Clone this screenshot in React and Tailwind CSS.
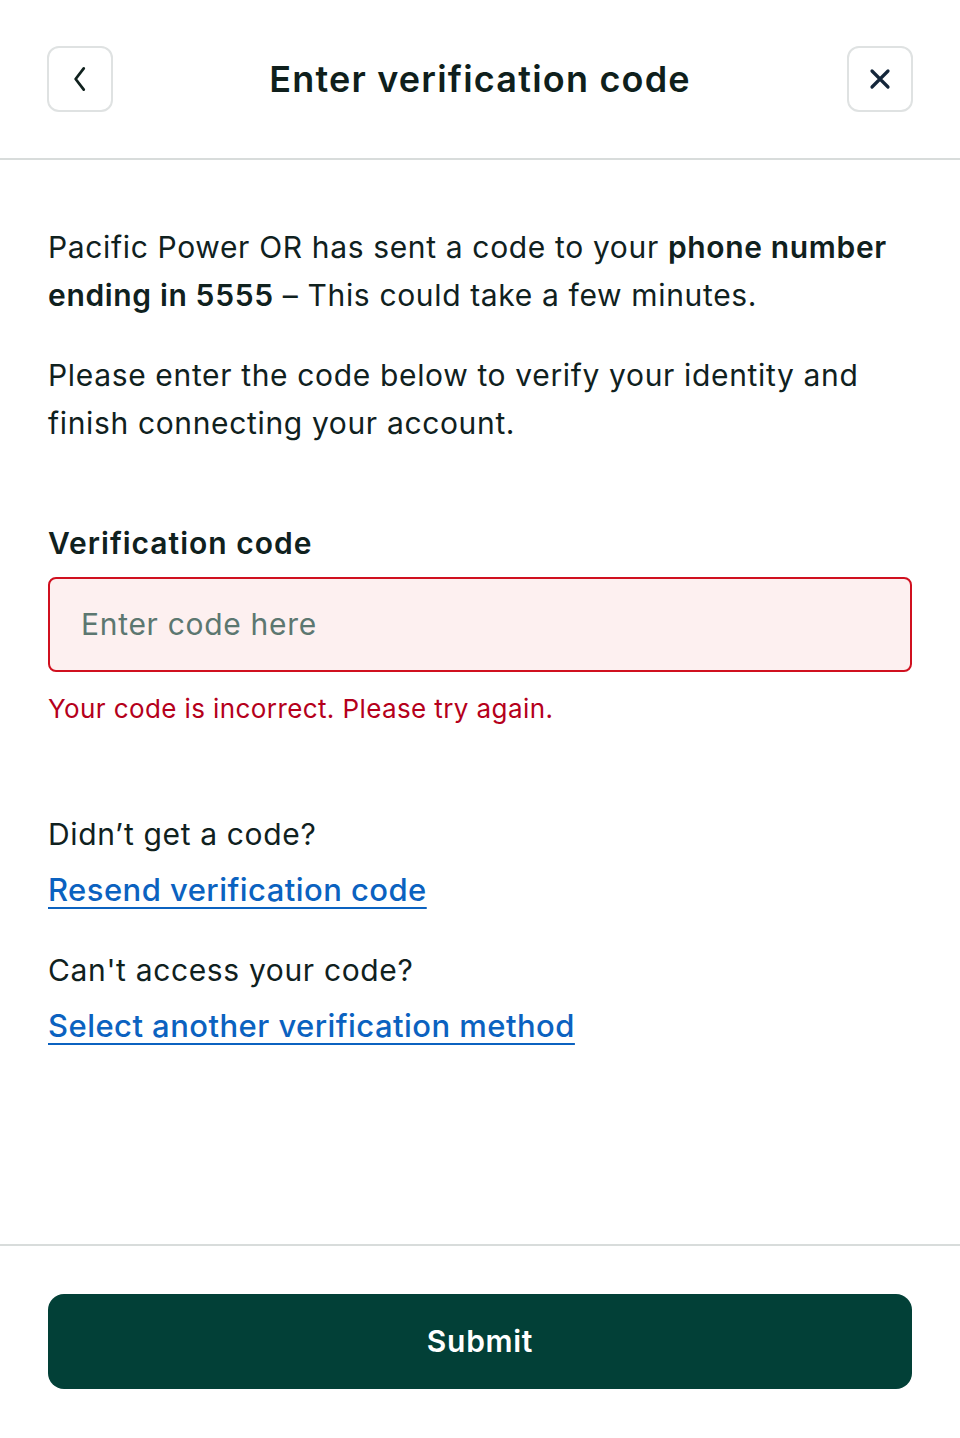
export default function App() {
  return (
    <div className="min-h-screen w-full bg-white flex flex-col font-['Inter',sans-serif] text-[#10211e]">
      {/* Header */}
      <div className="h-[160px] border-b-2 border-[#d8dcdb] px-[47px] flex items-center justify-between">
        <button className="w-[66px] h-[66px] rounded-[12px] border-2 border-[#dfe2e2] flex items-center justify-center">
          <svg width="30" height="30" viewBox="0 0 24 24" fill="none" stroke="#10211e" strokeWidth="2.2" strokeLinecap="round" strokeLinejoin="round">
            <path d="M15 3.5 L8.5 12 L15 20.5" />
          </svg>
        </button>
        <h1 className="text-[36px] font-semibold tracking-[1.2px] text-[#0f1f1c]">Enter verification code</h1>
        <button className="w-[66px] h-[66px] rounded-[12px] border-2 border-[#dfe2e2] flex items-center justify-center">
          <svg width="24" height="24" viewBox="0 0 24 24" fill="none" stroke="#14263a" strokeWidth="3.2" strokeLinecap="round">
            <path d="M4 4 L20 20 M20 4 L4 20" />
          </svg>
        </button>
      </div>

      {/* Content */}
      <div className="flex-1 px-[48px] pt-[63px]">
        <p className="text-[30px] leading-[48px] tracking-[0.65px]">
          Pacific Power OR has sent a code to your <span className="font-semibold">phone number ending in 5555</span> – This could take a few minutes.
        </p>
        <p className="mt-[32px] text-[30px] leading-[48px] tracking-[0.65px]">
          Please enter the code below to verify your identity and finish connecting your account.
        </p>

        <label className="block mt-[76px] text-[30px] leading-[40px] font-semibold tracking-[1px]">Verification code</label>
        <div className="mt-[14px] h-[95px] rounded-[8px] border-2 border-[#d0101f] bg-[#fdf0f0] flex items-center px-[31px]">
          <span className="text-[30px] text-[#5c7770] tracking-[0.7px]">Enter code here</span>
        </div>
        <p className="mt-[19px] text-[26px] leading-[36px] text-[#b5001b] tracking-[0.4px]">Your code is incorrect. Please try again.</p>

        <p className="mt-[83px] text-[30px] leading-[48px] tracking-[0.65px]">Didn’t get a code?</p>
        <a href="#" className="block mt-[8px] text-[31px] leading-[48px] font-medium text-[#0b62c0] underline underline-offset-[6px] decoration-2 tracking-[0.45px] w-fit">
          Resend verification code
        </a>
        <p className="mt-[32px] text-[30px] leading-[48px] tracking-[0.65px]">Can't access your code?</p>
        <a href="#" className="block mt-[8px] text-[31px] leading-[48px] font-medium text-[#0b62c0] underline underline-offset-[6px] decoration-2 tracking-[0.45px] w-fit">
          Select another verification method
        </a>
      </div>

      {/* Footer */}
      <div className="border-t-2 border-[#d8dcdb] px-[48px] pt-[48px] pb-[49px]">
        <button className="w-full h-[95px] rounded-[16px] bg-[#024037] text-white text-[30px] font-semibold tracking-[0.7px]">
          Submit
        </button>
      </div>
    </div>
  );
}
